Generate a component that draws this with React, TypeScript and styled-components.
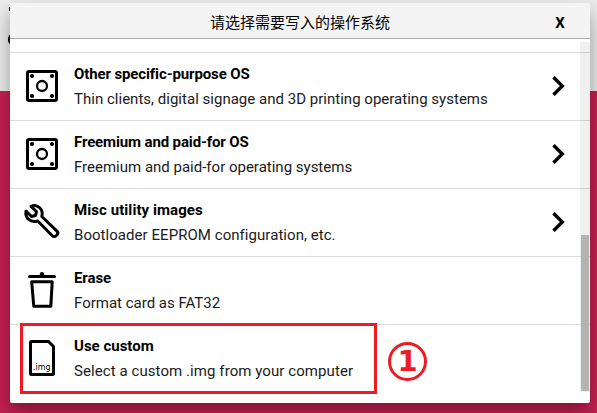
import React from "react";
import styled, { createGlobalStyle } from "styled-components";

const GlobalStyle = createGlobalStyle`
  html, body { margin: 0; padding: 0; overflow: hidden; }
  * { box-sizing: border-box; }
`;

const Screen = styled.main`
  position: relative;
  width: 597px;
  height: 413px;
  overflow: hidden;
  padding: 3px 7px 10px 10px;
  background: linear-gradient(#ececec 0 91px, #c62052 91px);
  font-family: Roboto, "Noto Sans CJK SC", sans-serif;
`;

const LogoSliver = styled.svg`
  position: absolute;
  left: 0;
  top: 0;
`;

const Dialog = styled.section`
  position: relative;
  display: flex;
  flex-direction: column;
  width: 580px;
  height: 400px;
  background: #fff;
  border-radius: 0 0 2px 2px;
  box-shadow: 0 10px 20px rgba(0, 0, 0, 0.36);
`;

const Header = styled.header`
  display: grid;
  grid-template-columns: 60px 1fr 60px;
  align-items: center;
  flex: none;
  height: 36px;
  background: #f4f4f4;
  border-bottom: 1px solid #aaa;
`;

const Title = styled.h1`
  grid-column: 2;
  margin: 0;
  padding-top: 3px;
  text-align: center;
  font: 400 15px/20px "Noto Sans CJK SC", sans-serif;
  color: #000;
`;

const CloseButton = styled.button`
  border: 0;
  padding: 4px 0 0;
  background: none;
  color: #000;
  font: 700 15px/18px Roboto, sans-serif;
`;

const Body = styled.div`
  display: flex;
  flex: 1;
  min-height: 0;
`;

const List = styled.ul`
  flex: 1;
  margin: 0 -10px 0 0;
  padding: 13px 0 0;
  list-style: none;
`;

const Row = styled.li`
  display: grid;
  grid-template-columns: 64px 1fr 54px;
  height: 68px;
  border-top: 1px solid #dcdcdc;
`;

const IconCell = styled.span`
  display: flex;
  align-items: center;
  height: 67px;
`;

const Copy = styled.div`
  padding-top: 12px;
  white-space: nowrap;
`;

const Name = styled.div<{ $tracking: number }>`
  font-size: 15px;
  font-weight: 700;
  line-height: 18px;
  letter-spacing: ${(p) => p.$tracking}px;
  color: #000;
`;

const Description = styled.div<{ $tracking: number }>`
  margin-top: 7px;
  font-size: 15px;
  line-height: 18px;
  letter-spacing: ${(p) => p.$tracking}px;
  color: #1a1a1a;
`;

const Track = styled.div`
  width: 10px;
  height: 350px;
  margin-top: 3px;
  padding: 193px 1px 1px;
  background: rgba(0, 0, 0, 0.06);
  z-index: 1;
`;

const Thumb = styled.div`
  height: 156px;
  background: #b3b3b3;
`;

const Highlight = styled.div`
  position: absolute;
  left: 20px;
  top: 323px;
  width: 357px;
  height: 71px;
  border: 3px solid #ed1c24;
`;

const StepBadge = styled.div`
  position: absolute;
  left: 388px;
  top: 342px;
  width: 39px;
  height: 39px;
  border: 3px solid #ed1c24;
  border-radius: 50%;
  color: #ed1c24;
  text-align: center;
  font: 700 29px/33px "DejaVu Sans", sans-serif;
`;

const BoardIcon = () => (
  <svg width="64" height="67" viewBox="0 0 64 67">
    <rect x="17.5" y="18.5" width="29" height="29" rx="1.5" fill="none" stroke="#000" strokeWidth="3" />
    <circle cx="32" cy="33" r="5" fill="none" stroke="#000" strokeWidth="2.3" />
    {[22, 42].map((x) => [23, 43].map((y) => <circle key={`${x}-${y}`} cx={x} cy={y} r="2.1" />))}
  </svg>
);

const WrenchIcon = () => (
  <svg width="64" height="67" viewBox="0 0 64 67" fill="none" stroke="#000" strokeWidth="3" strokeLinejoin="round">
    <path d="M21 17.3 L26.5 22.5 L25.5 26.5 L21.5 27.5 L16 22 C14.8 29 20.5 34.3 27.8 32 L42.5 47 C44.5 49.2 49.5 45 47.2 42.3 L31.8 27.5 C34 20.5 27.5 14.5 21 17.3 Z" />
  </svg>
);

const TrashIcon = () => (
  <svg width="64" height="67" viewBox="0 0 64 67" fill="none" stroke="#000" strokeWidth="3" strokeLinejoin="round">
    <path d="M19.5 19.5 H44.5" strokeLinecap="round" />
    <circle cx="32" cy="17.3" r="2.2" fill="#000" stroke="none" />
    <path d="M21.7 24.8 H42.2 L40.8 49.3 H23.8 Z" />
  </svg>
);

const FileIcon = () => (
  <svg width="64" height="67" viewBox="0 0 64 67">
    <path d="M21.5 16.5 H38.5 L43.5 21.5 V48.5 Q43.5 49.5 42.5 49.5 H21.5 Q20.5 49.5 20.5 48.5 V17.5 Q20.5 16.5 21.5 16.5 Z" fill="none" stroke="#000" strokeWidth="3" />
    <text x="23" y="44.5" fontFamily="DejaVu Sans, sans-serif" fontSize="9.5" textLength="17.5" lengthAdjust="spacingAndGlyphs">.img</text>
  </svg>
);

const Chevron = () => (
  <svg width="44" height="67" viewBox="0 0 44 67">
    <path d="M17.5 24.2 L26.3 33 L17.5 41.8" fill="none" stroke="#000" strokeWidth="3.4" />
  </svg>
);

const items = [
  { name: "Other specific-purpose OS", text: "Thin clients, digital signage and 3D printing operating systems", Icon: BoardIcon, nested: true, tracking: [-0.12, 0.016] },
  { name: "Freemium and paid-for OS", text: "Freemium and paid-for operating systems", Icon: BoardIcon, nested: true, tracking: [-0.13, 0] },
  { name: "Misc utility images", text: "Bootloader EEPROM configuration, etc.", Icon: WrenchIcon, nested: true, tracking: [0.07, 0.05] },
  { name: "Erase", text: "Format card as FAT32", Icon: TrashIcon, nested: false, tracking: [-0.1, 0] },
  { name: "Use custom", text: "Select a custom .img from your computer", Icon: FileIcon, nested: false, tracking: [0, 0.075] },
];

export default function App() {
  return (
    <Screen>
      <GlobalStyle />
      <LogoSliver width="14" height="50" viewBox="0 0 14 50">
        <rect x="9" y="7" width="5" height="4" />
        <ellipse cx="13" cy="39.5" rx="5" ry="6" />
      </LogoSliver>
      <Dialog>
        <Header>
          <Title>请选择需要写入的操作系统</Title>
          <CloseButton>X</CloseButton>
        </Header>
        <Body>
          <List>
            {items.map(({ name, text, Icon, nested, tracking }) => (
              <Row key={name}>
                <IconCell><Icon /></IconCell>
                <Copy>
                  <Name $tracking={tracking[0]}>{name}</Name>
                  <Description $tracking={tracking[1]}>{text}</Description>
                </Copy>
                {nested && <IconCell><Chevron /></IconCell>}
              </Row>
            ))}
          </List>
          <Track><Thumb /></Track>
        </Body>
      </Dialog>
      <Highlight />
      <StepBadge>1</StepBadge>
    </Screen>
  );
}
